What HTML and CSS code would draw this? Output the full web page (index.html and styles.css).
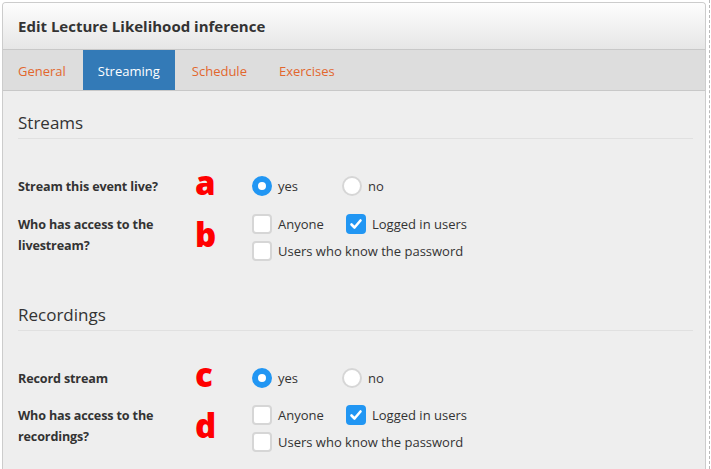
FILE: index.html
```html
<!DOCTYPE html>
<html>
<head>
<meta charset="utf-8">
<link rel="stylesheet" href="styles.css">
</head>
<body>
<div class="frame">
  <div class="panel">
    <div class="panel-header">Edit Lecture Likelihood inference</div>
    <ul class="tabs">
      <li class="tab">General</li>
      <li class="tab active">Streaming</li>
      <li class="tab">Schedule</li>
      <li class="tab">Exercises</li>
    </ul>
    <div class="panel-body">
      <h3 class="section-title">Streams</h3>
      <div class="form-row">
        <div class="label">Stream this event live?</div>
        <div class="marker">a</div>
        <div class="options">
          <div class="opt-line">
            <span class="opt radio-opt"><span class="radio on"></span>yes</span>
            <span class="opt"><span class="radio"></span>no</span>
          </div>
        </div>
      </div>
      <div class="form-row multi">
        <div class="label">Who has access to the livestream?</div>
        <div class="marker">b</div>
        <div class="options">
          <div class="opt-line">
            <span class="opt check-opt"><span class="check"></span>Anyone</span>
            <span class="opt"><span class="check on"><svg viewBox="0 0 20 20" width="20" height="20"><path d="M5.5 10.5l3 3 6-7" fill="none" stroke="#fff" stroke-width="2.6" stroke-linecap="round" stroke-linejoin="round"/></svg></span>Logged in users</span>
          </div>
          <div class="opt-line">
            <span class="opt"><span class="check"></span>Users who know the password</span>
          </div>
        </div>
      </div>

      <h3 class="section-title second">Recordings</h3>
      <div class="form-row">
        <div class="label">Record stream</div>
        <div class="marker">c</div>
        <div class="options">
          <div class="opt-line">
            <span class="opt radio-opt"><span class="radio on"></span>yes</span>
            <span class="opt"><span class="radio"></span>no</span>
          </div>
        </div>
      </div>
      <div class="form-row multi last">
        <div class="label">Who has access to the recordings?</div>
        <div class="marker">d</div>
        <div class="options">
          <div class="opt-line">
            <span class="opt check-opt"><span class="check"></span>Anyone</span>
            <span class="opt"><span class="check on"><svg viewBox="0 0 20 20" width="20" height="20"><path d="M5.5 10.5l3 3 6-7" fill="none" stroke="#fff" stroke-width="2.6" stroke-linecap="round" stroke-linejoin="round"/></svg></span>Logged in users</span>
          </div>
          <div class="opt-line">
            <span class="opt"><span class="check"></span>Users who know the password</span>
          </div>
        </div>
      </div>
    </div>
  </div>
  <div class="dash"></div>
</div>
</body>
</html>
```

FILE: styles.css
```css
html, body {
  margin: 0;
  padding: 0;
  background: #ffffff;
  height: 100%;
  overflow: hidden;
}
body {
  font-family: "Open Sans", "Noto Sans", sans-serif;
  font-size: 13px;
  color: #333333;
}
.frame {
  display: flex;
  padding: 2px 0 0 2px;
  height: 467px;
}
.panel {
  width: 702px;
  border: 1px solid #cccccc;
  border-bottom: none;
  border-radius: 4px 4px 0 0;
  background: #eeeeee;
  overflow: hidden;
}
.dash {
  margin-left: 3px;
  border-left: 1px dashed #b8b8b8;
  height: 469px;
  margin-top: -2px;
}
.panel-header {
  height: 46px;
  line-height: 46px;
  padding-left: 15px;
  font-size: 15px;
  font-weight: 700;
  color: #333333;
  background: linear-gradient(#fdfdfd, #e6e6e6);
}
.tabs {
  list-style: none;
  margin: 0;
  padding: 0;
  display: flex;
  gap: 2px;
  height: 40px;
  background: #dddddd;
  border-top: 1px solid #c8c8c8;
  border-bottom: 1px solid #c8c8c8;
}
.tab {
  padding: 1px 15px 0;
  line-height: 40px;
  color: #e2672e;
  font-size: 13px;
}
.tab.active {
  background: #337ab7;
  color: #ffffff;
}
.panel-body {
  padding: 0 12px 0 15px;
}
.section-title {
  margin: 20px 0 0;
  padding-bottom: 3px;
  font-size: 17px;
  font-weight: 400;
  line-height: 24px;
  color: #333333;
  border-bottom: 1px solid #e0e0e0;
}
.section-title.second {
  margin-top: 39px;
}
.form-row {
  display: grid;
  grid-template-columns: 177px 57px 1fr;
  align-items: center;
  min-height: 28px;
}
.section-title + .form-row {
  margin-top: 30px;
}
.form-row.multi {
  margin-top: 7px;
  align-items: start;
}
.form-row.multi.last {
  margin-top: 6px;
}
.label {
  font-weight: 700;
  font-size: 12.6px;
  letter-spacing: -0.15px;
  line-height: 21px;
  width: 150px;
}
.multi .label {
  padding-top: 4px;
}
.marker {
  color: #ff0000;
  font-weight: 800;
  font-size: 33px;
  line-height: 28px;
  padding-bottom: 6px;
}
.multi .marker {
  align-self: center;
  padding-bottom: 4px;
}
.options {
  display: flex;
  flex-direction: column;
}
.opt-line {
  display: flex;
  align-items: center;
  height: 27px;
}
.form-row:not(.multi) .opt-line {
  height: 28px;
}
.opt {
  display: flex;
  align-items: center;
  gap: 6px;
  color: #333333;
}
.radio-opt {
  width: 90px;
}
.check-opt {
  width: 94px;
}
.radio {
  box-sizing: border-box;
  width: 20px;
  height: 20px;
  border-radius: 50%;
  background: #ffffff;
  border: 2px solid #d6d6d6;
}
.radio.on {
  border: 6.5px solid #2196f3;
}
.check {
  box-sizing: border-box;
  width: 20px;
  height: 20px;
  border-radius: 4px;
  background: #ffffff;
  border: 2px solid #d6d6d6;
  display: flex;
}
.check.on {
  background: #2196f3;
  border: none;
}
```
